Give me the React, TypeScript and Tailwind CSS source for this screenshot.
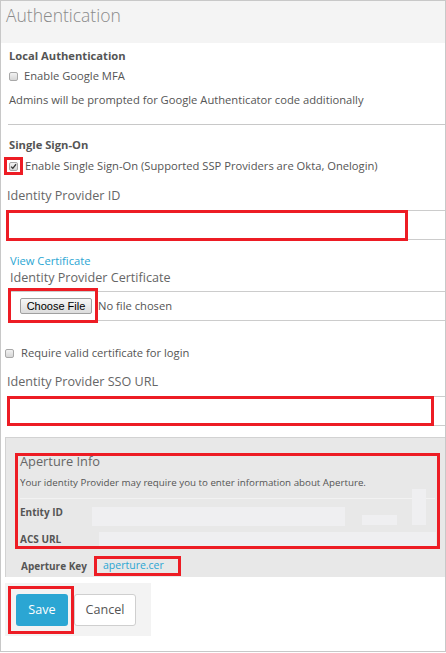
import React from "react";

const RED = "border-[#ed1c24]";

function Box({ checked = false }: { checked?: boolean }) {
  return (
    <span className="relative inline-flex w-[9px] h-[9px] shrink-0 rounded-[2px] border border-[#a8a8a8] bg-gradient-to-b from-[#f2f2f2] to-[#d6d6d6]">
      {checked && (
        <svg viewBox="0 0 10 10" className="absolute left-[0px] top-[0px] w-[7px] h-[7px]">
          <path d="M1.5 5.2 L4 7.6 L8.6 1.8" fill="none" stroke="#333" strokeWidth="1.8" />
        </svg>
      )}
    </span>
  );
}

export default function App() {
  return (
    <div
      className="w-[446px] h-[652px] border border-[#c8c8c8] bg-white text-[#555] text-[11.2px] overflow-hidden"
      style={{ fontFamily: '"Open Sans", "Noto Sans", sans-serif' }}
    >
      {/* header */}
      <div className="h-[42px] bg-[#f4f4f4] pl-[5px] flex items-start pt-[2px]">
        <span className="text-[17.5px] font-light text-[#8a8a8a] leading-[24px]">Authentication</span>
      </div>

      {/* Local auth */}
      <div className="mt-[5px] h-[16px] flex items-center ml-[8px] font-bold text-[#555]">Local Authentication</div>
      <div className="mt-[4px] h-[16px] flex items-center ml-[8px] gap-[6px]">
        <Box />
        <span>Enable Google MFA</span>
      </div>
      <div className="mt-[8px] h-[16px] flex items-center ml-[8px]">
        Admins will be prompted for Google Authenticator code additionally
      </div>
      <div className="mt-[16px] ml-[7px] border-t border-[#c8c8c8]" />

      {/* SSO */}
      <div className="mt-[12px] h-[16px] flex items-center ml-[8px] font-bold">Single Sign-On</div>
      <div className="mt-[4px] h-[18px] flex items-center ml-[3px]">
        <div className={`w-[19px] h-[18px] border-[3px] ${RED} flex items-center justify-center`}>
          <Box checked />
        </div>
        <span className="ml-[2px]">Enable Single Sign-On (Supported SSP Providers are Okta, Onelogin)</span>
      </div>

      <div className="mt-[12px] h-[18px] flex items-center ml-[6px] text-[12.6px] text-[#666]">Identity Provider ID</div>
      <div className="mt-[5px] ml-[6px] h-[30px] border-y border-[#cccccc] relative">
        <div className={`absolute left-[-1px] top-[-1px] w-[402px] h-[31px] border-[3px] ${RED}`} />
      </div>

      <div className="mt-[13px] h-[16px] flex items-center ml-[9px] text-[#2aa6d3]">View Certificate</div>
      <div className="h-[18px] flex items-center ml-[9px] text-[12.6px] text-[#666]">Identity Provider Certificate</div>
      <div className="mt-[4px] ml-[8px] h-[30px] border-y border-[#cccccc] relative flex items-center">
        <div className={`absolute left-[-1px] top-[-4px] w-[90px] h-[35px] border-[3px] ${RED}`} />
        <span
          className="ml-[11px] w-[72px] h-[16px] flex items-center justify-center rounded-[2px] border border-[#a0a0a0] bg-gradient-to-b from-[#f7f7f7] to-[#dcdcdc] text-[11px] text-black"
          style={{ fontFamily: '"Liberation Sans", Arial, sans-serif' }}
        >
          Choose File
        </span>
        <span className="ml-[6px] text-[#555]">No file chosen</span>
      </div>

      <div className="mt-[24px] h-[16px] flex items-center ml-[4px] gap-[7px]">
        <Box />
        <span>Require valid certificate for login</span>
      </div>

      <div className="mt-[12px] h-[18px] flex items-center ml-[6px] text-[12.6px] text-[#666]">Identity Provider SSO URL</div>
      <div className="mt-[5px] ml-[6px] h-[30px] border-y border-[#cccccc] relative">
        <div className={`absolute left-[0px] top-[-1px] w-[427px] h-[30px] border-[3px] ${RED}`} />
      </div>

      {/* Aperture panel */}
      <div className="mt-[11px] ml-[4px] h-[140px] bg-[#e8e8e8] border-t border-l border-[#d2d2d2] flex flex-col">
        <div className={`mt-[15px] ml-[9px] w-[425px] border-[3px] ${RED} flex flex-col pl-[2px]`}>
          <div className="h-[12px] flex items-center text-[12.8px] text-[#666]">Aperture Info</div>
          <div className="mt-[8px] h-[14px] flex items-center text-[9.75px] text-[#555]">
            Your identity Provider may require you to enter information about Aperture.
          </div>
          <div className="mt-[8px] h-[1px] bg-[#f2f2f2] mr-[2px]" />
          <div className="h-[26px] flex items-center relative">
            <span className="text-[10px] font-bold">Entity ID</span>
            <span className="absolute left-[72px] top-[8px] w-[253px] h-[19px] bg-[#efeff1]" />
            <span className="absolute left-[342px] top-[16px] w-[35px] h-[10px] bg-[#efeff1]" />
            <span className="absolute left-[392px] top-[-10px] w-[14px] h-[36px] bg-[#efeff1]" />
          </div>
          <div className="h-[21px] flex items-center pt-[7px] relative">
            <span className="text-[10px] font-bold">ACS URL</span>
            <span className="absolute left-[79px] top-[7px] w-[337px] h-[14px] bg-[#efeff1]" />
          </div>
        </div>
        <div className="mt-[7px] h-[20px] flex items-center pl-[15px]">
          <span className="text-[10px] font-bold w-[73px]">Aperture Key</span>
          <div className={`w-[87px] h-[20px] border-[3px] ${RED} flex items-center pl-[6px] text-[10.5px] text-[#2aa6d3]`}>
            aperture.cer
          </div>
        </div>
      </div>

      {/* buttons */}
      <div className="mt-[6px] ml-[4px] w-[146px] h-[53px] bg-[#f3f3f3] pl-[3px] pt-[3px] flex items-start">
        <div className={`w-[66px] h-[48px] border-[3px] ${RED} pl-[5px] pt-[5px]`}>
          <div className="w-[52px] h-[32px] rounded-[3px] bg-[#2ba6d3] text-white text-[12.6px] flex items-center justify-center">
            Save
          </div>
        </div>
        <div className="mt-[8px] w-[62px] h-[32px] rounded-[3px] border border-[#cfcfcf] bg-white text-[12.6px] text-[#555] flex items-center justify-center">
          Cancel
        </div>
      </div>
    </div>
  );
}
